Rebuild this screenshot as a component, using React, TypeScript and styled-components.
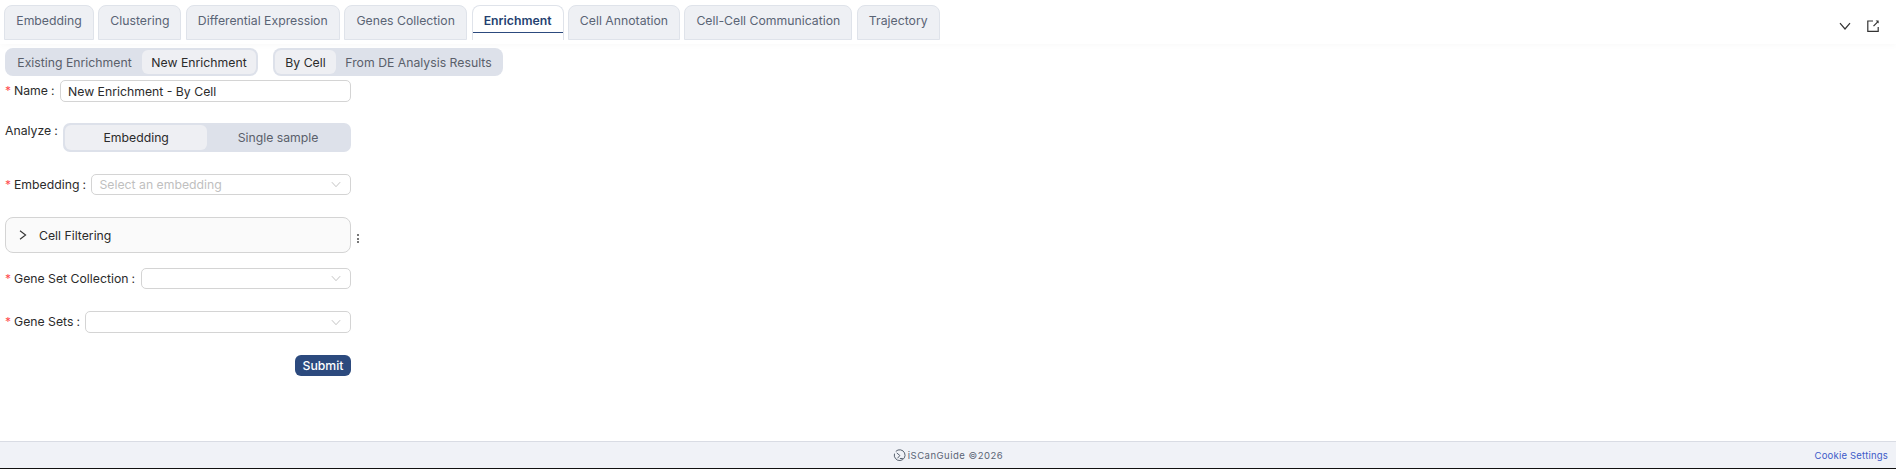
import React from 'react';
import styled, { createGlobalStyle } from 'styled-components';

const tabs = [
  { label: 'Embedding', width: 90 },
  { label: 'Clustering', width: 83 },
  { label: 'Differential Expression', width: 154 },
  { label: 'Genes Collection', width: 123 },
  { label: 'Enrichment', width: 92, active: true },
  { label: 'Cell Annotation', width: 112 },
  { label: 'Cell-Cell Communication', width: 168 },
  { label: 'Trajectory', width: 83 },
];

const SelectArrow = () => (
  <ArrowSvg viewBox="0 0 12 8" fill="none" stroke="#b8b8b8" strokeWidth="1">
    <path d="M1 1.2 6 6.6 11 1.2" />
  </ArrowSvg>
);

export default function App() {
  return (
    <Page>
      <GlobalStyle />
      <Header>
        <TabList>
          {tabs.map((tab) => (
            <Tab key={tab.label} $active={tab.active} $width={tab.width}>
              <TabLabel $active={tab.active}>{tab.label}</TabLabel>
            </Tab>
          ))}
        </TabList>
        <HeaderIcons>
          <HeaderSvg viewBox="0 0 14 14" fill="none" stroke="#333" strokeWidth="1.2">
            <path d="M2 4.2 7 10 12 4.2" />
          </HeaderSvg>
          <HeaderSvg viewBox="0 0 14 14" fill="none" stroke="#333" strokeWidth="1.2">
            <path d="M7 2H1.8v10.4h10.4V8" />
            <path d="M7.5 7.2 12 2.6" />
            <path d="M9.6 1.6h3v3" fill="#333" stroke="none" />
          </HeaderSvg>
        </HeaderIcons>
      </Header>

      <Content>
        <SegmentRow>
          <Segment>
            <SegmentItem $width={135}>Existing Enrichment</SegmentItem>
            <SegmentItem $width={114} $selected>New Enrichment</SegmentItem>
          </Segment>
          <Segment>
            <SegmentItem $width={61} $selected>By Cell</SegmentItem>
            <SegmentItem $width={165}>From DE Analysis Results</SegmentItem>
          </Segment>
        </SegmentRow>

        <Form>
          <Field $mb={21}>
            <Label $required>Name</Label>
            <TextInput defaultValue="New Enrichment - By Cell" />
          </Field>

          <Field $mb={22} $top>
            <Label>Analyze</Label>
            <AnalyzeToggle>
              <ToggleItem $selected>Embedding</ToggleItem>
              <ToggleItem>Single sample</ToggleItem>
            </AnalyzeToggle>
          </Field>

          <Field $mb={22}>
            <Label $required>Embedding</Label>
            <SelectBox>
              <Placeholder>Select an embedding</Placeholder>
              <SelectArrow />
            </SelectBox>
          </Field>

          <CollapseRow>
            <Collapse>
              <CollapseArrow viewBox="0 0 8 10" fill="none" stroke="#333" strokeWidth="1.1">
                <path d="M1 .8 6.6 5 1 9.2" />
              </CollapseArrow>
              <CollapseTitle>Cell Filtering</CollapseTitle>
            </Collapse>
            <MoreDots>
              <Dot />
              <Dot />
              <Dot />
            </MoreDots>
          </CollapseRow>

          <Field $mb={22}>
            <Label $required>Gene Set Collection</Label>
            <SelectBox>
              <Placeholder />
              <SelectArrow />
            </SelectBox>
          </Field>

          <Field $mb={22}>
            <Label $required>Gene Sets</Label>
            <SelectBox $height={22}>
              <Placeholder />
              <SelectArrow />
            </SelectBox>
          </Field>

          <SubmitRow>
            <SubmitButton>Submit</SubmitButton>
          </SubmitRow>
        </Form>
      </Content>

      <Footer>
        <FooterCenter>
          <FooterLogo viewBox="0 0 14 14" fill="none" stroke="#4b5563" strokeWidth="1">
            <path d="M3 2.6A5.8 5.8 0 1 1 1.6 5" />
            <path d="M4 4.2 7.4 7 4.8 10M7.4 10.2h3.2" />
          </FooterLogo>
          iSCanGuide ©2026
        </FooterCenter>
        <CookieLink>Cookie Settings</CookieLink>
      </Footer>
    </Page>
  );
}

const GlobalStyle = createGlobalStyle`
  html, body {
    margin: 0;
    padding: 0;
    background: #fff;
    font-family: Inter, "Liberation Sans", sans-serif;
  }
  * {
    box-sizing: border-box;
  }
`;

const Page = styled.div`
  width: 1896px;
  height: 469px;
  display: flex;
  flex-direction: column;
  background: #fff;
  border-bottom: 1px solid #111;
  overflow: hidden;
`;

const Header = styled.header`
  height: 44px;
  flex-shrink: 0;
  display: flex;
  align-items: flex-end;
  justify-content: space-between;
  padding: 0 16px 4px 4px;
  background: #fff;
  box-shadow: 0 2px 6px rgba(0, 0, 0, 0.025);
`;

const TabList = styled.div`
  display: flex;
  gap: 4.4px;
`;

const Tab = styled.div<{ $active?: boolean; $width: number }>`
  width: ${(p) => p.$width}px;
  height: 35px;
  display: flex;
  justify-content: center;
  background: ${(p) => (p.$active ? '#fff' : '#eef0f4')};
  border: 1px solid #dfe3ea;
  border-bottom: ${(p) => (p.$active ? 'none' : '1px solid #dfe3ea')};
  border-radius: 8px 8px 0 0;
`;

const TabLabel = styled.span<{ $active?: boolean }>`
  height: ${(p) => (p.$active ? '27px' : 'auto')};
  width: ${(p) => (p.$active ? '100%' : 'auto')};
  padding-top: 7px;
  text-align: center;
  font-size: 12.25px;
  line-height: 16px;
  font-weight: ${(p) => (p.$active ? 600 : 400)};
  color: ${(p) => (p.$active ? '#253f70' : '#5a6475')};
  border-bottom: ${(p) => (p.$active ? '1.5px solid #2c4a7e' : 'none')};
`;

const HeaderIcons = styled.div`
  display: flex;
  align-items: center;
  gap: 14px;
  height: 22px;
  margin-bottom: 3px;
`;

const HeaderSvg = styled.svg`
  width: 14px;
  height: 14px;
`;

const Content = styled.main`
  flex: 1;
  padding: 4px 5px 0;
`;

const SegmentRow = styled.div`
  display: flex;
  gap: 15px;
  margin-bottom: 4px;
`;

const Segment = styled.div`
  display: flex;
  height: 28px;
  padding: 2px;
  background: #dde1ea;
  border-radius: 8px;
`;

const SegmentItem = styled.div<{ $width: number; $selected?: boolean }>`
  width: ${(p) => p.$width}px;
  display: flex;
  align-items: center;
  justify-content: center;
  font-size: 12.25px;
  color: ${(p) => (p.$selected ? '#2b2b2b' : '#5a5f6a')};
  background: ${(p) => (p.$selected ? '#eeeff3' : 'transparent')};
  border-radius: 6px;
`;

const Form = styled.form`
  width: 346px;
  display: flex;
  flex-direction: column;
`;

const Field = styled.div<{ $mb: number; $top?: boolean }>`
  display: flex;
  align-items: ${(p) => (p.$top ? 'flex-start' : 'center')};
  margin-bottom: ${(p) => p.$mb}px;
`;

const Label = styled.label<{ $required?: boolean }>`
  flex-shrink: 0;
  display: flex;
  align-items: center;
  font-size: 12.25px;
  line-height: 16px;
  color: #2b2b2b;
  margin-right: 5px;
  &::before {
    content: ${(p) => (p.$required ? "'*'" : 'none')};
    color: #ff4d4f;
    width: 9px;
    font-size: 12px;
  }
  &::after {
    content: ':';
    margin-left: 3px;
    width: 4px;
  }
`;

const TextInput = styled.input`
  flex: 1;
  min-width: 0;
  height: 22px;
  padding: 0 7px;
  font-family: inherit;
  font-size: 12.25px;
  color: #2b2b2b;
  background: #fff;
  border: 1px solid #d4d4d4;
  border-radius: 5px;
  outline: none;
`;

const AnalyzeToggle = styled.div`
  flex: 1;
  height: 29px;
  display: flex;
  padding: 2px;
  background: #dde1ea;
  border-radius: 7px;
`;

const ToggleItem = styled.div<{ $selected?: boolean }>`
  flex: 1;
  display: flex;
  align-items: center;
  justify-content: center;
  font-size: 12.25px;
  color: ${(p) => (p.$selected ? '#2b2b2b' : '#5a5f6a')};
  background: ${(p) => (p.$selected ? '#eeeff3' : 'transparent')};
  border-radius: 6px;
`;

const SelectBox = styled.div<{ $height?: number }>`
  flex: 1;
  min-width: 0;
  height: ${(p) => p.$height ?? 21}px;
  display: flex;
  align-items: center;
  justify-content: space-between;
  padding: 0 9px 0 7px;
  background: #fff;
  border: 1px solid #d4d4d4;
  border-radius: 5px;
`;

const ArrowSvg = styled.svg`
  width: 10px;
  height: 7px;
`;

const Placeholder = styled.span`
  font-size: 12.25px;
  color: #bfbfbf;
`;

const CollapseRow = styled.div`
  position: relative;
  margin-bottom: 15px;
`;

const Collapse = styled.div`
  height: 36px;
  display: flex;
  align-items: center;
  gap: 12px;
  padding-left: 13px;
  background: #fafafa;
  border: 1px solid #d4d4d4;
  border-radius: 8px;
`;

const CollapseArrow = styled.svg`
  width: 8px;
  height: 10px;
`;

const CollapseTitle = styled.span`
  font-size: 12.25px;
  color: #2b2b2b;
`;

const MoreDots = styled.span`
  position: absolute;
  right: -8px;
  top: 17px;
  display: flex;
  flex-direction: column;
  gap: 1.5px;
`;

const Dot = styled.i`
  width: 2px;
  height: 2px;
  background: #777;
`;

const SubmitRow = styled.div`
  display: flex;
  justify-content: flex-end;
`;

const SubmitButton = styled.button`
  height: 21px;
  width: 56px;
  padding: 0;
  font-family: inherit;
  font-size: 12.25px;
  font-weight: 500;
  color: #fff;
  background: #2c4a7e;
  border: none;
  border-radius: 6px;
`;

const Footer = styled.footer`
  position: relative;
  height: 27px;
  flex-shrink: 0;
  display: flex;
  align-items: center;
  justify-content: center;
  background: #f0f2f7;
  border-top: 1px solid #d9dce4;
`;

const FooterCenter = styled.div`
  display: flex;
  align-items: center;
  gap: 2px;
  font-size: 9.5px;
  letter-spacing: 0.5px;
  color: #5a6475;
`;

const FooterLogo = styled.svg`
  width: 13px;
  height: 13px;
`;

const CookieLink = styled.a`
  position: absolute;
  right: 8px;
  font-size: 9.5px;
  letter-spacing: 0.2px;
  color: #3d5bc9;
`;
